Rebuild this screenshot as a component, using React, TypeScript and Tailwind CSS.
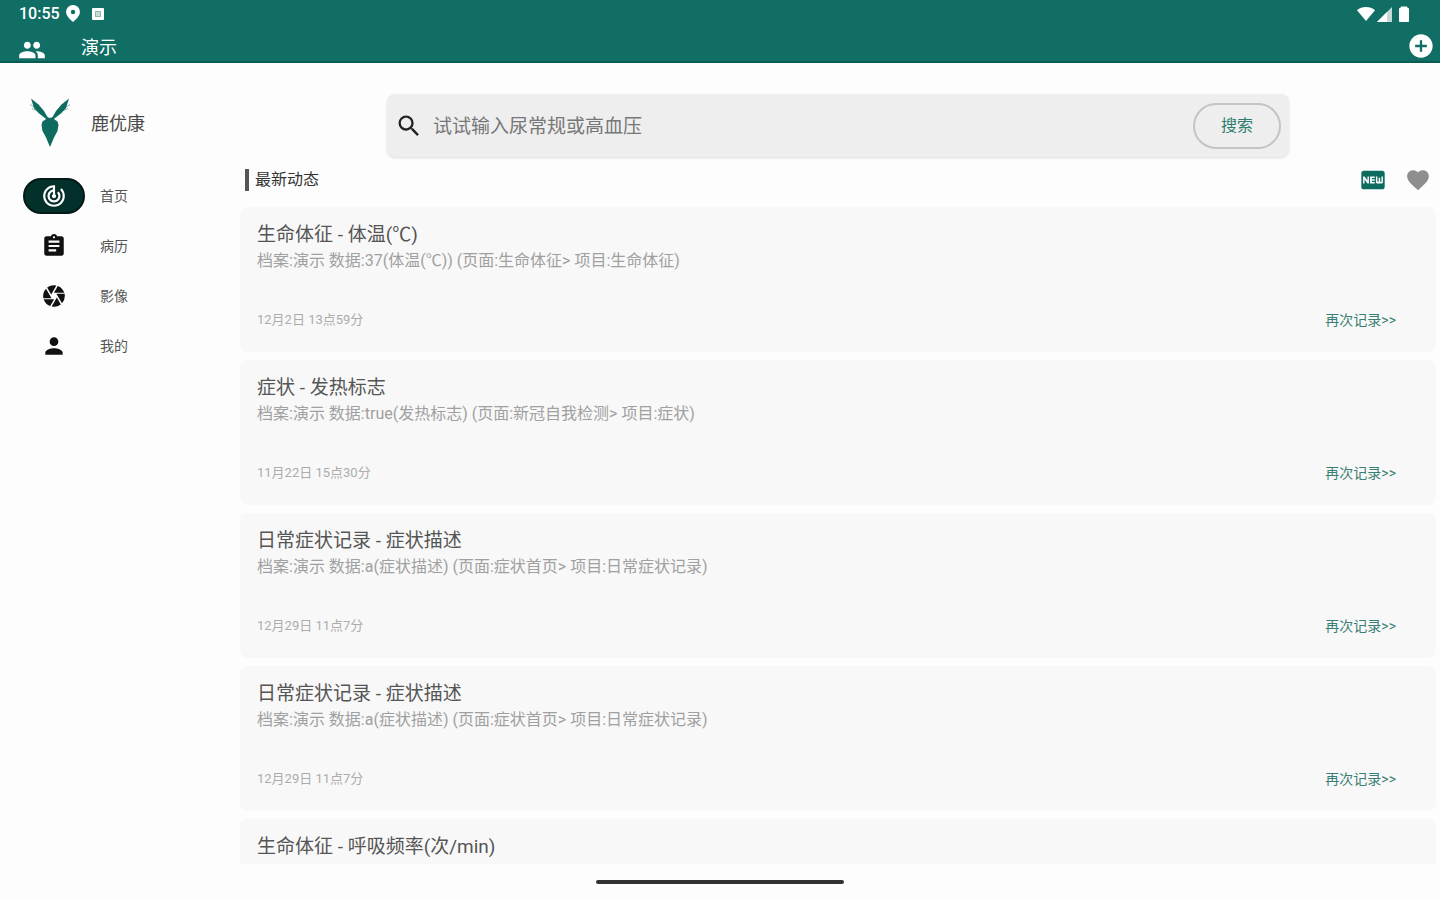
import {
  MdAddCircle,
  MdAssignment,
  MdCamera,
  MdFavorite,
  MdFiberNew,
  MdPeople,
  MdPerson,
  MdSearch,
  MdTrackChanges,
} from "react-icons/md";

const navItems = [
  { id: "home", label: "首页", icon: MdTrackChanges },
  { id: "records", label: "病历", icon: MdAssignment },
  { id: "images", label: "影像", icon: MdCamera },
  { id: "mine", label: "我的", icon: MdPerson },
];

interface Entry {
  title: string;
  detail?: string;
  time?: string;
}

const entries: Entry[] = [
  {
    title: "生命体征 - 体温(℃)",
    detail: "档案:演示 数据:37(体温(℃)) (页面:生命体征> 项目:生命体征)",
    time: "12月2日 13点59分",
  },
  {
    title: "症状 - 发热标志",
    detail: "档案:演示 数据:true(发热标志) (页面:新冠自我检测> 项目:症状)",
    time: "11月22日 15点30分",
  },
  {
    title: "日常症状记录 - 症状描述",
    detail: "档案:演示 数据:a(症状描述) (页面:症状首页> 项目:日常症状记录)",
    time: "12月29日 11点7分",
  },
  {
    title: "日常症状记录 - 症状描述",
    detail: "档案:演示 数据:a(症状描述) (页面:症状首页> 项目:日常症状记录)",
    time: "12月29日 11点7分",
  },
  { title: "生命体征 - 呼吸频率(次/min)" },
];

function StatusBar() {
  return (
    <div className="flex h-7 items-center justify-between pr-[30px] pl-[19px] text-white">
      <div className="flex items-center">
        <span className="text-base font-medium">10:55</span>
        <svg viewBox="0 0 14 18" className="ml-1.5 h-[18px] w-3.5">
          <path d="M7 0a7 7 0 0 0-7 7c0 4.500 7 10 7 10s7-5.500 7-10a7 7 0 0 0-7-7z" fill="#fff" />
          <circle cx="7" cy="7" r="2.200" fill="#106e65" />
        </svg>
        <svg viewBox="0 0 12 12" className="ml-3 size-3">
          <rect width="12" height="12" rx="1" fill="#fff" />
          <path d="M3 3h6v6H3z" fill="#8fb8b3" />
          <path d="M4 5h4M4 7h4" stroke="#fff" strokeWidth="1" />
        </svg>
      </div>
      <div className="flex items-center gap-0.5">
        <svg viewBox="0 0 18 14" className="h-3.5 w-[18px]">
          <path d="M9 14 0 3.200C2.400 1 5.500 0 9 0s6.600 1 9 3.200z" fill="#fff" />
        </svg>
        <svg viewBox="0 0 15 15" className="size-[15px]">
          <path d="M15 0v15H0z" fill="#fff" fillOpacity=".75" />
          <path d="M10 5v10H0z" fill="#fff" />
        </svg>
        <svg viewBox="0 0 12 16" className="ml-1 h-4 w-3">
          <path d="M3 2V1h6v1.500h1.500v13h-9v-13H3z" fill="#fff" stroke="#fff" strokeLinejoin="round" />
        </svg>
      </div>
    </div>
  );
}

function Header() {
  return (
    <header className="h-[63px] shrink-0 border-b-2 border-[#075d53] bg-[#106e65]">
      <StatusBar />
      <div className="flex h-[35px] items-center justify-between pr-[5px] pl-[18px] text-white">
        <div className="flex items-center">
          <button type="button" aria-label="切换档案" className="pt-2">
            <MdPeople className="size-7" />
          </button>
          <h1 className="ml-[35px] pt-1 text-lg leading-6">演示</h1>
        </div>
        <button type="button" aria-label="添加">
          <MdAddCircle className="size-7" />
        </button>
      </div>
    </header>
  );
}

function Logo() {
  return (
    <svg viewBox="0 0 42 50" className="h-[50px] w-[42px]" fill="#0d6b60">
      <path d="M21 50 17 40.500 13.500 34 12.500 28l1-3.500 3-2L17.500 20l3.500 1 3.500-1 1 2.500 3 2 1 3.500-1 6-3.500 6.500z" />
      <path d="M16.500 21.500 9.500 16 5 11 2 1.500l7.500 6L15 14l4 7z" />
      <path d="M25.500 21.500 32.500 16 37 11 40 1.500l-7.500 6L27 14l-4 7z" />
      <path
        d="M5 10 1 7.500M7.500 13.500 3 11.500M37 10l4-2.500M34.500 13.500l4.500-2"
        stroke="#0d6b60"
        strokeOpacity=".5"
        strokeWidth="1"
        fill="none"
      />
    </svg>
  );
}

function Sidebar() {
  return (
    <aside className="w-60 shrink-0 pt-[34px]">
      <div className="flex items-center gap-5 pl-[29px]">
        <Logo />
        <span className="pt-1 text-lg text-[#4a4a4a]">鹿优康</span>
      </div>
      <nav className="mt-[31px] flex flex-col gap-3.5 pl-[23px]">
        {navItems.map((item) => (
          <button key={item.id} type="button" className="flex items-center gap-[15px] text-left">
            <span
              className={
                item.id === "home"
                  ? "flex h-9 w-[62px] items-center justify-center rounded-full border-2 border-[#031a17] bg-[#04302b] text-white"
                  : "flex h-9 w-[62px] items-center justify-center text-[#111]"
              }
            >
              <item.icon className="size-[26px]" />
            </span>
            <span className="text-sm text-[#555]">{item.label}</span>
          </button>
        ))}
      </nav>
    </aside>
  );
}

function SearchBar() {
  return (
    <form
      className="mx-[147px] flex h-[63px] shrink-0 items-center rounded-lg bg-[#eeeeee] pr-2 pl-2 shadow"
      onSubmit={(e) => e.preventDefault()}
    >
      <MdSearch className="size-7 text-[#222]" />
      <input
        type="search"
        aria-label="搜索"
        placeholder="试试输入尿常规或高血压"
        className="ml-2.5 min-w-0 flex-1 bg-transparent pt-1 text-[19px] outline-none placeholder:text-[#777]"
      />
      <button
        type="submit"
        className="h-[46px] w-[88px] rounded-full border-2 border-[#c4c4c4] text-base text-[#2f7d72]"
      >
        搜索
      </button>
    </form>
  );
}

function EntryCard({ title, detail, time }: Entry) {
  return (
    <article className="flex h-[145px] shrink-0 flex-col rounded-lg bg-[#f8f8f8] pt-3.5 pr-10 pb-5 pl-[17px]">
      <h3 className="text-[19px] leading-7 text-[#555]">{title}</h3>
      {detail && <p className="text-base leading-6 text-[#a0a0a0]">{detail}</p>}
      {time && (
        <div className="mt-auto flex items-center justify-between text-[13px] leading-6">
          <time className="text-[#acacac]">{time}</time>
          <button type="button" className="text-sm leading-6 text-[#3a7f74]">
            再次记录&gt;&gt;
          </button>
        </div>
      )}
    </article>
  );
}

export default function App() {
  return (
    <div className="flex h-screen flex-col overflow-hidden bg-[#fdfdfd] font-['Roboto','Noto_Sans_CJK_SC',sans-serif]">
      <Header />
      <div className="flex min-h-0 flex-1">
        <Sidebar />
        <main className="flex min-w-0 flex-1 flex-col pt-[31px] pr-1">
          <SearchBar />
          <div className="flex h-[50px] shrink-0 items-center justify-between pr-[5px] pb-1 pl-[5px]">
            <h2 className="flex items-center gap-1.5 text-base leading-6 text-[#333]">
              <span className="h-[22px] w-1 bg-[#555]" />
              最新动态
            </h2>
            <div className="flex items-center gap-[18px]">
              <button type="button" aria-label="最新">
                <MdFiberNew className="size-7 text-[#0d6b60]" />
              </button>
              <button type="button" aria-label="收藏">
                <MdFavorite className="size-[26px] text-[#8e8e8e]" />
              </button>
            </div>
          </div>
          <div className="flex min-h-0 flex-1 flex-col gap-2 overflow-hidden">
            {entries.map((entry, i) => (
              <EntryCard key={i} {...entry} />
            ))}
          </div>
        </main>
      </div>
      <footer className="flex h-9 shrink-0 items-center justify-center">
        <div className="h-1 w-[248px] rounded-full bg-[#333]" />
      </footer>
    </div>
  );
}
